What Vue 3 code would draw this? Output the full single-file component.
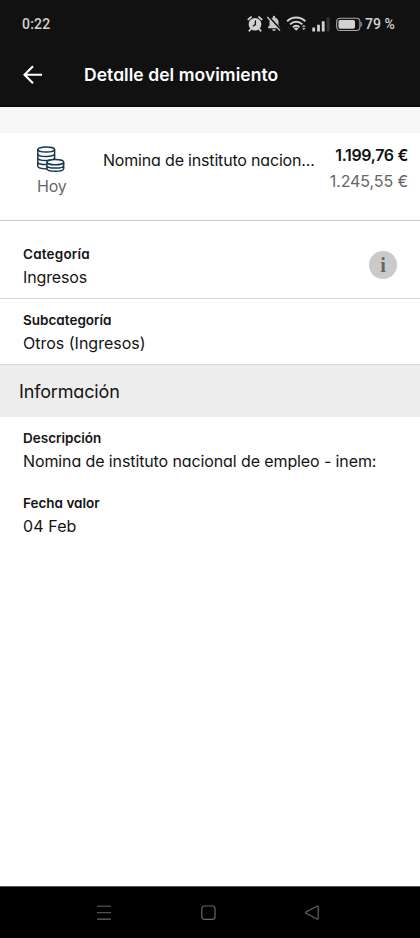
<script setup>
const amount = '1.199,76 €'
const balance = '1.245,55 €'
</script>

<template>
  <div class="screen">
    <header class="top">
      <div class="status">
        <span class="clock">0:22</span>
        <div class="indicators">
          <svg class="alarm" width="16" height="18" viewBox="0 0 16 18">
            <circle cx="8" cy="9.3" r="6.3" fill="#d2d2d2" />
            <path d="M1.4 4.4 4 2.1M14.6 4.4 12 2.1M3.6 14.2 2.4 15.8M12.4 14.2l1.2 1.6" stroke="#d2d2d2" stroke-width="1.9" stroke-linecap="round" />
            <path d="M8.4 5.5v4.1l-2.6 1.7" fill="none" stroke="#111" stroke-width="1.3" />
          </svg>
          <svg class="bell" width="16" height="18" viewBox="0 0 16 18">
            <path d="M2 13.3V12l1.5-1.6V7.2C3.5 4.8 4.8 3.3 6.8 2.8V2a1.2 1.2 0 0 1 2.4 0v.8c2 .5 3.3 2 3.3 4.4v3.2L14 12v1.3zM6.2 14.3h3.6a1.8 1.8 0 0 1-3.6 0z" fill="#c6c6c6" />
            <path d="M2.4 1.8 15 15.2" stroke="#111" stroke-width="2.4" />
            <path d="M1.2 2 14 15.6" stroke="#d2d2d2" stroke-width="1.3" />
          </svg>
          <svg class="wifi" width="22" height="18" viewBox="0 0 22 18">
            <g fill="none" stroke="#d2d2d2" stroke-width="1.9">
              <path d="M1.1 6.3C6.3 1.3 14.1 1.3 19.3 6.3" />
              <path d="M4 9.4c3.7-3.6 8.7-3.6 12.4 0" />
              <path d="M6.9 12.2c2-1.9 4.6-1.9 6.6 0" />
            </g>
            <path d="m7.8 13.3 2.4 2.4 2.4-2.4q-2.4-1.6-4.8 0z" fill="#d2d2d2" />
            <path d="m16.5 11.6 1.3-1.5 1.3 1.5zM16.5 13.3l1.3 1.5 1.3-1.5z" fill="#c8c8c8" stroke="#c8c8c8" stroke-width=".5" />
          </svg>
          <svg class="signal" width="18" height="15" viewBox="0 0 18 15">
            <path d="M.3 10.5h2.8v3.9H.3zM5.1 7.8h2.8v6.6H5.1zM9.8 4.3h2.8v10.1H9.8z" fill="#d2d2d2" />
            <path d="M14.7.5h2.8v13.9h-2.8z" fill="#373737" />
          </svg>
          <svg class="battery" width="27" height="15" viewBox="0 0 27 15">
            <rect x=".7" y="1.2" width="23.2" height="12.3" rx="3.4" fill="none" stroke="#aaa" stroke-width="1.1" />
            <rect x="2.5" y="3" width="16.5" height="8.7" rx="1.6" fill="#d2d2d2" />
            <path d="M25 5.2q1.4 2.1 0 4.3z" fill="#aaa" stroke="#aaa" stroke-width=".6" />
          </svg>
          <span class="percent">79 %</span>
        </div>
      </div>
      <div class="bar">
        <svg class="back" width="20" height="20" viewBox="0 0 20 20">
          <path d="M19 9.8H1.6M10 1.3 1.5 9.8l8.5 8.5" fill="none" stroke="#fff" stroke-width="2.1" />
        </svg>
        <h1>Detalle del movimiento</h1>
      </div>
    </header>

    <div class="strip"></div>

    <section class="movement">
      <div class="when">
        <svg width="28" height="27" viewBox="0 0 28 27">
          <g fill="none" stroke="#173950" stroke-width="1.5">
            <ellipse cx="9.2" cy="3.6" rx="8.4" ry="2.5" />
            <path d="M.8 3.6v16.5c0 1.7 3.8 2.8 9.2 2.8M17.6 3.6v9.7M.8 7.7c0 3.7 16.8 3.7 16.8 0M.8 11.8c0 3.7 16.8 3.7 16.8 0M.8 15.9c0 1.9 4.2 2.8 8.8 2.7" />
            <ellipse cx="18.3" cy="16.2" rx="8.4" ry="2.6" fill="#fff" />
            <path d="M9.9 16.2v6.3c0 3.8 16.8 3.8 16.8 0v-6.3M9.9 19.4c0 3.6 16.8 3.6 16.8 0" />
          </g>
        </svg>
        <span>Hoy</span>
      </div>
      <p class="concept">Nomina de instituto nacion...</p>
      <div class="sums">
        <strong>{{ amount }}</strong>
        <span>{{ balance }}</span>
      </div>
    </section>

    <section class="row category">
      <div>
        <h3 class="l1">Categoría</h3>
        <p class="v1">Ingresos</p>
      </div>
      <span class="info">i</span>
    </section>
    <section class="row sub">
      <div>
        <h3 class="l2">Subcategoría</h3>
        <p class="v2">Otros (Ingresos)</p>
      </div>
    </section>

    <h2>Información</h2>

    <section class="row plain">
      <div>
        <h3 class="l3">Descripción</h3>
        <p class="v3">Nomina de instituto nacional de empleo - inem:</p>
      </div>
    </section>
    <section class="row plain">
      <div>
        <h3 class="l4">Fecha valor</h3>
        <p class="v4">04 Feb</p>
      </div>
    </section>

    <nav>
      <svg width="16" height="16" viewBox="0 0 16 16"><path d="M1 1.3h14M1 7.8h14M1 14.1h14" stroke="#686868" stroke-width="1.1" /></svg>
      <svg width="16" height="16" viewBox="0 0 16 16"><rect x="1.8" y="1" width="13.2" height="13.4" rx="2.8" fill="none" stroke="#686868" stroke-width="1.2" /></svg>
      <svg width="16" height="16" viewBox="0 0 16 16"><path d="M13 1.2 2 7q-.9.6 0 1.2L13 14q1.2.5 1.2-.8V2q0-1.3-1.2-.8z" fill="none" stroke="#686868" stroke-width="1.1" /></svg>
    </nav>
  </div>
</template>

<style>
body { background: #fff; }
</style>

<style scoped>
.screen {
  display: flex;
  flex-direction: column;
  width: 420px;
  height: 938px;
  overflow: hidden;
  color: #141414;
  background: #fff;
  font-family: Inter, "Liberation Sans", sans-serif;
  font-feature-settings: "cv11";
}
h1, h2, h3, p { margin: 0; white-space: nowrap; }
.top { height: 107px; flex: none; box-sizing: border-box; background: #111; border-bottom: 1px solid #060606; }
.status { display: flex; justify-content: space-between; height: 48px; align-items: center; padding: 0 25px 0 22px; color: #d2d2d2; font: 500 14px Roboto, sans-serif; }
.clock { letter-spacing: .2px; }
.indicators { display: flex; align-items: center; }
.bell { margin-left: 3px; }
.wifi { margin-left: 4px; }
.signal { margin-left: 3.5px; }
.battery { margin-left: 6px; }
.percent { margin-left: 2px; letter-spacing: .1px; }
.bar { display: flex; height: 53px; align-items: center; padding-left: 23px; }
h1 { margin-left: 41px; color: #fff; font-size: 17.5px; line-height: 24px; font-weight: 600; letter-spacing: .05px; }
.strip { height: 26px; flex: none; background: #f7f7f7; }
.movement { display: flex; height: 88px; flex: none; box-sizing: border-box; padding: 13px 12px 0 37px; border-bottom: 1px solid #c9c9c9; }
.when { display: flex; flex-direction: column; width: 66px; color: #666; font-size: 16px; line-height: 20px; letter-spacing: -.2px; }
.when span { margin-top: 3px; }
.concept { font-size: 16px; line-height: 20px; padding-top: 4px; letter-spacing: -.18px; }
.sums { display: flex; flex-direction: column; margin-left: auto; align-items: flex-end; font-size: 16px; line-height: 26px; margin-top: -4px; letter-spacing: -.1px; }
.sums strong { font-weight: 600; color: #111; letter-spacing: -.33px; }
.sums span { color: #666; }
.row { display: flex; flex: none; box-sizing: border-box; justify-content: space-between; padding: 11px 23px 0; height: 66px; border-bottom: 1px solid #d7d7d7; }
.category { height: 78px; padding-top: 23px; }
.row h3 { font-size: 13.5px; line-height: 20px; font-weight: 600; }
.row .l1 { letter-spacing: .2px; }
.row p { font-size: 16px; line-height: 26px; }
.row .v1 { letter-spacing: -.12px; }
.row .v3 { letter-spacing: -.11px; }
.row .v4 { letter-spacing: .1px; }
.info { width: 28px; height: 28px; margin-top: 7px; border-radius: 50%; background: #cacaca; color: #666; text-align: center; font: bold 20px/28px "Liberation Serif", serif; }
h2 { height: 52px; flex: none; padding-left: 19px; background: #ededed; font-size: 18px; line-height: 53px; font-weight: 400; letter-spacing: -.15px; }
.plain { height: 65px; border: 0; }
nav { display: flex; height: 52px; flex: none; box-sizing: border-box; margin-top: auto; padding: 0 100px 0 96px; justify-content: space-between; align-items: center; background: #000; border-top: 1px solid #555; }
</style>
